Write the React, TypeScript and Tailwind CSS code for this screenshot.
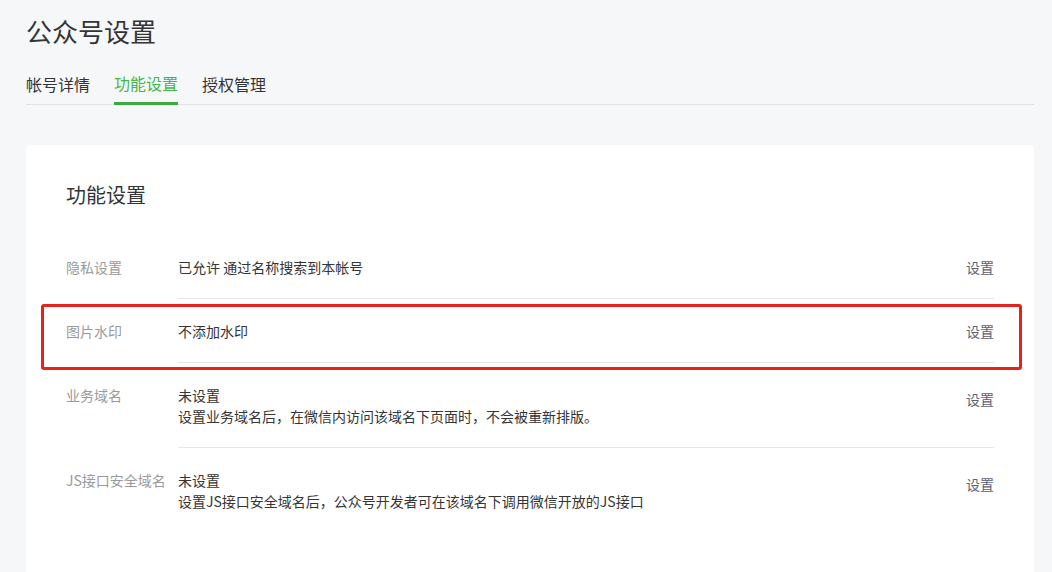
const font = "font-['Microsoft_YaHei','Noto_Sans_CJK_SC',sans-serif]"

const tabs = [
  { name: "帐号详情", active: false },
  { name: "功能设置", active: true },
  { name: "授权管理", active: false },
]

const rows = [
  { label: "隐私设置", lines: ["已允许 通过名称搜索到本帐号"] },
  { label: "图片水印", lines: ["不添加水印"] },
  { label: "业务域名", lines: ["未设置", "设置业务域名后，在微信内访问该域名下页面时，不会被重新排版。"] },
  { label: "JS接口安全域名", lines: ["未设置", "设置JS接口安全域名后，公众号开发者可在该域名下调用微信开放的JS接口"] },
]

export default function App() {
  return (
    <div className={`${font} h-[572px] w-[1052px] overflow-hidden bg-[#f6f7f9] pl-[26px] pr-[18px] text-[#353535]`}>
      <h1 className="pt-[13px] text-[26px] font-normal leading-[36px]">公众号设置</h1>

      <div className="mt-[15px] flex gap-6 border-b border-[#e1e3e6]">
        {tabs.map((tab) => (
          <div
            key={tab.name}
            className={
              tab.active
                ? "-mb-px border-b-[3px] border-[#3bab3f] pt-px text-[16px] leading-[37px] text-[#44b549]"
                : "text-[16px] leading-[40px]"
            }
          >
            {tab.name}
          </div>
        ))}
      </div>

      <div className="relative mt-[40px] h-[500px] rounded-sm bg-white px-10 pt-9">
        <h2 className="mb-[26px] text-[20px] font-normal leading-[28px]">功能设置</h2>

        {rows.map((row, i) => (
          <div key={row.label} className="flex text-[14px] leading-[21px]">
            <div className="w-[112px] shrink-0 pt-[22px] text-[#9a9a9a]">{row.label}</div>
            <div
              className={`flex flex-1 items-start justify-between pt-[22px] pb-[20px] ${
                i < rows.length - 1 ? "border-b border-[#e7e7eb]" : ""
              }`}
            >
              <div>
                {row.lines.map((line) => (
                  <p key={line}>{line}</p>
                ))}
              </div>
              <a className={`text-[#5b6275] ${row.lines.length > 1 ? "mt-1" : ""}`}>设置</a>
            </div>
          </div>
        ))}

        {/* red highlight annotation */}
        <div className="pointer-events-none absolute left-[15px] top-[159px] h-[66px] w-[981px] rounded-[3px] border-[3px] border-[#e3231c]" />
      </div>
    </div>
  )
}
